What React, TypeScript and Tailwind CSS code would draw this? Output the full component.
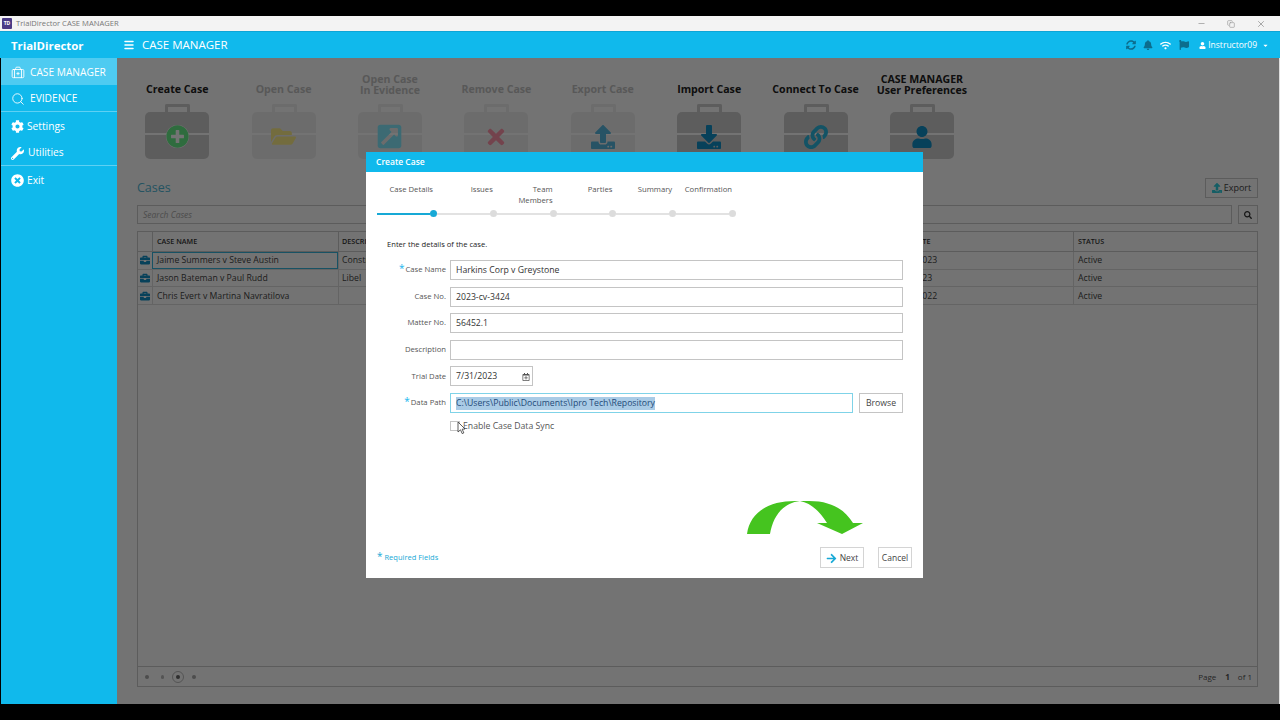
import type { ReactNode } from 'react'
import { BriefcaseMedical, Search, Menu, Minus, X, Copy } from 'lucide-react'
import {
  FaArrowRight,
  FaBell,
  FaBriefcase,
  FaCaretDown,
  FaCog,
  FaDownload,
  FaFlag,
  FaFolderOpen,
  FaLink,
  FaPlusCircle,
  FaRegCalendarPlus,
  FaSearch,
  FaSyncAlt,
  FaTimes,
  FaTimesCircle,
  FaUpload,
  FaUser,
  FaWifi,
  FaWrench,
  FaExternalLinkSquareAlt,
} from 'react-icons/fa'

const font = "font-['Open_Sans','Noto_Sans',sans-serif]"

function Case({ children, enabled }: { children: ReactNode; enabled: boolean }) {
  return (
    <div className="relative h-[55px] w-[64px]">
      <div className={`absolute inset-0 ${enabled ? 'opacity-100' : 'opacity-30'}`}>
        <div className="absolute left-[20px] top-0 h-[10px] w-[25px] rounded-t-[2px] border-[3px] border-b-0 border-[#cfcfcf]" />
        <div className="absolute left-0 top-[8px] h-[47px] w-[64px] rounded-[5px] bg-[#cfcfcf]" />
        <div className="absolute left-0 top-[29px] h-[2px] w-[64px] bg-white" />
      </div>
      <div className="absolute inset-0 top-[10px] flex items-center justify-center">{children}</div>
    </div>
  )
}

const tools = [
  {
    label: ['Create Case'],
    enabled: true,
    icon: (
      <span className="inline-flex rounded-full bg-white">
        <FaPlusCircle className="text-[23px] text-[#68f08a]" />
      </span>
    ),
  },
  { label: ['Open Case'], enabled: false, icon: <FaFolderOpen className="text-[25px] text-[#fff08a]" /> },
  { label: ['Open Case', 'In Evidence'], enabled: false, icon: <FaExternalLinkSquareAlt className="text-[27px] text-[#85ecff]" /> },
  { label: ['Remove Case'], enabled: false, icon: <FaTimes className="text-[24px] text-[#ff96aa]" /> },
  { label: ['Export Case'], enabled: false, icon: <FaUpload className="text-[24px] text-[#58b8e0]" /> },
  { label: ['Import Case'], enabled: true, icon: <FaDownload className="text-[24px] text-[#1090c8]" /> },
  { label: ['Connect To Case'], enabled: true, icon: <FaLink className="text-[24px] text-[#2cb8e0]" /> },
  { label: ['CASE MANAGER', 'User Preferences'], enabled: true, icon: <FaUser className="text-[22px] text-[#1090c8]" /> },
]

const navItems = [
  { label: 'CASE MANAGER', icon: <BriefcaseMedical size={14} strokeWidth={1.5} />, gap: 'gap-[5px]', active: true, line: false },
  { label: 'EVIDENCE', icon: <Search size={14} strokeWidth={1.5} />, gap: 'gap-[5px]', active: false, line: true },
  { label: 'Settings', icon: <FaCog className="text-[13px]" />, gap: 'gap-[3px]', active: false, line: false },
  { label: 'Utilities', icon: <FaWrench className="text-[13px]" />, gap: 'gap-[4px]', active: false, line: true },
  { label: 'Exit', icon: <FaTimesCircle className="text-[13px]" />, gap: 'gap-[3px]', active: false, line: false },
]

const rows = [
  { name: 'Jaime Summers v Steve Austin', desc: 'Constr', date: '5/10/2023', selected: true },
  { name: 'Jason Bateman v Paul Rudd', desc: 'Libel', date: '5/1/2023', selected: false },
  { name: 'Chris Evert v Martina Navratilova', desc: '', date: '8/14/2022', selected: false },
]

const steps = [['Case Details'], ['Issues'], ['Team', 'Members'], ['Parties'], ['Summary'], ['Confirmation']]

function Field({ label, required, children }: { label: string; required?: boolean; children: ReactNode }) {
  return (
    <div className="flex h-[20px] items-center">
      <div className="flex w-[84px] shrink-0 justify-end pr-[4px] text-[7.7px] text-[#555]">
        {required && <span className="mr-px -translate-y-px text-[10px] leading-none text-[#17b5ee]">*</span>}
        {label}
      </div>
      {children}
    </div>
  )
}

function TextBox({ value }: { value: string }) {
  return (
    <div className="flex h-[20px] w-[453px] items-center border border-[#c4c4c4] px-[5px] pt-px text-[8.7px] text-[#333]">
      {value}
    </div>
  )
}

export default function App() {
  return (
    <div className={`flex h-[720px] w-[1280px] flex-col overflow-hidden bg-black ${font}`}>
      <div className="mt-[16px] flex h-[15px] shrink-0 items-center bg-[#f3f3f3] pl-[2px]">
        <div className="flex h-[11px] w-[10px] items-center justify-center rounded-[1px] bg-[#4a3a86] text-[5px] font-bold leading-none text-white">
          TD
        </div>
        <span className="ml-[4px] text-[7.6px] text-[#777]">TrialDirector CASE MANAGER</span>
        <div className="ml-auto flex items-center gap-[21px] pr-[14px] text-[#999]">
          <Minus size={9} />
          <Copy size={8} />
          <X size={10} />
        </div>
      </div>

      <div className="flex h-[27px] shrink-0 items-center border-t border-[#0ea5d6] bg-[#10b9ec] pl-px text-white">
        <div className="w-[116px] pl-[10px] pt-[2px] text-[11.4px] font-bold">TrialDirector</div>
        <Menu size={12} strokeWidth={3} className="ml-[6px]" />
        <span className="ml-[7px] text-[11.5px]">CASE MANAGER</span>
        <div className="ml-auto flex items-center pr-[11px]">
          <FaSyncAlt className="text-[10px] text-[#0c6d8d]" />
          <FaBell className="ml-[7px] text-[10px] text-[#0c6d8d]" />
          <FaWifi className="ml-[7px] text-[11px] text-white" />
          <FaFlag className="ml-[8px] text-[10px] text-[#0c6d8d]" />
          <FaUser className="ml-[10px] text-[7px] text-white" />
          <span className="ml-[2px] text-[8.5px]">Instructor09</span>
          <FaCaretDown className="ml-[5px] text-[7px]" />
        </div>
      </div>

      <div className="flex h-[646px] shrink-0 pl-px">
        <aside className="w-[116px] shrink-0 bg-[#10b9ec] text-white">
          {navItems.map((item) => (
            <div
              key={item.label}
              className={`flex h-[27px] items-center pl-[10px] pt-[2px] text-[10.2px] ${item.gap} ${item.active ? 'bg-[#4ecbf1]' : ''} ${item.line ? 'border-b border-[#5ed0f3]' : ''}`}
            >
              {item.icon}
              <span>{item.label}</span>
            </div>
          ))}
        </aside>

        <main className="relative flex min-w-0 flex-1 flex-col border-r border-[#ddd] bg-white">
          <div className="flex pl-[7px] pt-[14px]">
            {tools.map((tool) => (
              <div key={tool.label[0] + tool.label.length} className="flex w-[106.4px] flex-col items-center">
                <div
                  className={`flex h-[32px] flex-col items-center justify-end text-[10.6px] font-bold leading-[11px] ${tool.label.length > 1 ? 'pb-[8.5px]' : 'pb-[9.5px]'} ${tool.enabled ? 'text-[#222]' : 'text-[#c4c4c4]'}`}
                >
                  {tool.label.map((line) => (
                    <span key={line}>{line}</span>
                  ))}
                </div>
                <Case enabled={tool.enabled}>{tool.icon}</Case>
              </div>
            ))}
          </div>

          <div className="flex min-h-0 flex-1 flex-col pb-[17px] pl-[20px] pr-[21px] pt-[19px]">
            <div className="flex h-[20px] items-center justify-between">
              <span className="pt-px text-[12.5px] text-[#50b8d8]">Cases</span>
              <div className="flex h-[20px] w-[53px] items-center justify-center gap-[2px] border border-[#ccc] text-[9px] text-[#444]">
                <FaUpload className="text-[10px] text-[#30d0e0]" />
                Export
              </div>
            </div>
            <div className="mt-[7px] flex h-[19px] gap-[6px]">
              <div className="flex flex-1 items-center border border-[#ccc] px-[5px] pt-px text-[8.5px] italic text-[#aaa]">
                Search Cases
              </div>
              <div className="flex w-[20px] items-center justify-center border border-[#ccc] text-[#333]">
                <FaSearch className="text-[8px]" />
              </div>
            </div>

            <div className="mt-[7px] flex min-h-0 flex-1 flex-col border border-[#ccc] text-[8.7px] text-[#444]">
              <div className="flex h-[20px] items-center border-b border-[#ccc] text-[7.2px] font-semibold text-[#333]">
                <div className="w-[14px]" />
                <div className="flex h-full w-[186px] items-center border-l border-[#ccc] pl-[4px]">CASE NAME</div>
                <div className="flex h-full w-[549px] items-center border-l border-[#ccc] pl-[3px]">DESCRIPTION</div>
                <div className="flex h-full w-[186px] items-center border-l border-[#ccc] pl-[3px]">TRIAL DATE</div>
                <div className="flex h-full flex-1 items-center border-l border-[#ccc] pl-[4px]">STATUS</div>
              </div>
              {rows.map((row) => (
                <div key={row.name} className="flex h-[17.7px] items-center border-b border-[#ddd]">
                  <div className="flex w-[14px] justify-center">
                    <FaBriefcase className="text-[10px] text-[#1090c8]" />
                  </div>
                  <div
                    className={`flex h-full w-[186px] items-center pl-[4px] pt-px ${row.selected ? 'border border-[#35b7dd]' : 'border-l border-[#ddd]'}`}
                  >
                    {row.name}
                  </div>
                  <div className="flex h-full w-[549px] items-center border-l border-[#ddd] pl-[3px] pt-px">{row.desc}</div>
                  <div className="flex h-full w-[186px] items-center border-l border-[#ddd] pl-[8px] pt-px">{row.date}</div>
                  <div className="flex h-full flex-1 items-center border-l border-[#ddd] pl-[4px] pt-px">Active</div>
                </div>
              ))}
            </div>

            <div className="flex h-[20px] items-center border border-t-0 border-[#ccc] pl-[7px] pr-[5px] text-[8px] text-[#555]">
              <div className="flex items-center gap-[12px]">
                <span className="h-[4px] w-[4px] rounded-full bg-[#aaa]" />
                <span className="h-[4px] w-[3px] rounded-full bg-[#bbb]" />
                <span className="relative h-[4px] w-[4px] rounded-full bg-[#666]">
                  <span className="absolute -inset-[4px] rounded-full border border-[#bbb]" />
                </span>
                <span className="h-[4px] w-[4px] rounded-full bg-[#aaa]" />
              </div>
              <span className="ml-auto">Page</span>
              <span className="ml-[9px] font-bold">1</span>
              <span className="ml-[8px]">of 1</span>
            </div>
          </div>

          {/* dimmed backdrop + dialog */}
          <div className="absolute inset-0 bg-black/55" />
          <div className="absolute left-[249px] top-[94px] flex h-[426px] w-[557px] flex-col bg-white">
            <div className="flex h-[20px] shrink-0 items-center bg-[#10b9ec] pl-[10px] text-[8.5px] font-semibold text-white">
              Create Case
            </div>

            <div className="ml-[11px] mt-[12px] flex h-[21px] items-start text-[7.7px] leading-[10.5px] text-[#555]">
              {steps.map((step, i) => (
                <div key={step[0]} className={`flex flex-col items-end ${i === 0 ? 'w-[56px]' : 'w-[59.8px]'}`}>
                  {step.map((line) => (
                    <span key={line}>{line}</span>
                  ))}
                </div>
              ))}
            </div>
            <div className="ml-[11px] mt-[5px] flex w-[359px] items-center">
              {steps.map((step, i) => (
                <div key={step[0]} className={`flex items-center ${i === 0 ? 'w-[60px]' : 'w-[59.8px]'}`}>
                  <div className={`h-[2px] flex-1 ${i === 0 ? 'bg-[#17a9d6]' : 'bg-[#e2e2e2]'}`} />
                  <div className={`h-[7px] w-[7px] rounded-full ${i === 0 ? 'bg-[#17a9d6]' : 'bg-[#dcdcdc]'}`} />
                </div>
              ))}
            </div>

            <div className="ml-[21px] mt-[22px] text-[7.6px] leading-[11px] text-[#222]">Enter the details of the case.</div>

            <div className="mt-[10px] flex flex-col gap-[6.6px]">
              <Field label="Case Name" required>
                <TextBox value="Harkins Corp v Greystone" />
              </Field>
              <Field label="Case No.">
                <TextBox value="2023-cv-3424" />
              </Field>
              <Field label="Matter No.">
                <TextBox value="56452.1" />
              </Field>
              <Field label="Description">
                <TextBox value="" />
              </Field>
              <Field label="Trial Date">
                <div className="flex h-[20px] w-[83px] items-center justify-between border border-[#c4c4c4] pl-[5px] pr-[2px] pt-px text-[8.7px] text-[#333]">
                  7/31/2023
                  <FaRegCalendarPlus className="text-[8px] text-[#555]" />
                </div>
              </Field>
              <Field label="Data Path" required>
                <div className="flex h-[20px] w-[403px] items-center border border-[#7fd3e8] px-[5px] pt-px text-[8.7px] text-[#234a78]">
                  <span className="bg-[#a9cbe6]">C:\Users\Public\Documents\Ipro Tech\Repository</span>
                </div>
                <div className="ml-[6px] flex h-[20px] w-[44px] items-center justify-center border border-[#c4c4c4] pt-px text-[8.7px] text-[#444]">
                  Browse
                </div>
              </Field>
            </div>

            <div className="relative ml-[84px] mt-[8px] flex h-[11px] items-center text-[8.7px] text-[#555]">
              <div className="h-[10px] w-[10px] border border-[#c4c4c4]" />
              <span className="ml-[3px]">Enable Case Data Sync</span>
              <svg viewBox="0 0 9 14" className="absolute left-[7px] top-[0px] h-[14px] w-[9px]">
                <path d="M1 1 L1 11 L3.5 8.8 L5.2 12.6 L6.8 11.9 L5.2 8.2 L8 8 Z" fill="#fff" stroke="#333" strokeWidth="0.8" />
              </svg>
            </div>

            <div className="mt-auto flex items-center justify-between pb-[10px] pl-[11px] pr-[11px]">
              <span className="text-[7.5px] text-[#17a9d6]">
                <span className="text-[10px] leading-none">*</span> Required Fields
              </span>
              <div className="flex gap-[14px] text-[8.5px] text-[#444]">
                <div className="flex h-[21px] w-[44px] items-center justify-center gap-[3px] border border-[#d4d4d4] pt-px">
                  <FaArrowRight className="text-[11px] text-[#17a9d6]" />
                  Next
                </div>
                <div className="flex h-[21px] w-[34px] items-center justify-center border border-[#d4d4d4] pt-px">Cancel</div>
              </div>
            </div>

            {/* green hint arrow drawn over the dialog */}
            <svg viewBox="0 0 117 36" className="absolute left-[381px] top-[348px] h-[36px] w-[117px]">
              <path
                d="M0 34 C3 12 22 1 48 1 L62 1 C85 1 98 10 106 23 L116 23 L95 34 L70 23 L80 23 C72 10 63 3 53 1 C36 3 26 16 23 34 Z"
                fill="#45c41f"
              />
            </svg>
          </div>
        </main>
      </div>
    </div>
  )
}
